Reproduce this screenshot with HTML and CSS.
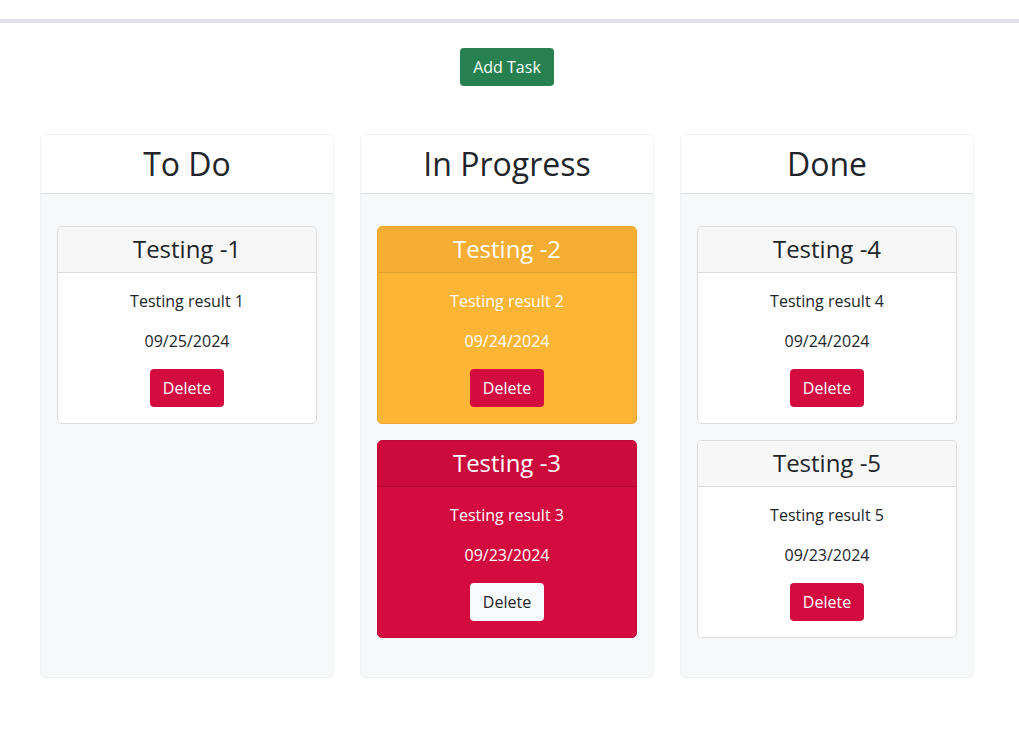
FILE: index.html
```html
<!DOCTYPE html>
<html lang="en">
<head>
<meta charset="utf-8">
<title>Task Board</title>
<link rel="stylesheet" href="styles.css">
</head>
<body>
<div class="topbar"></div>
<div class="wrap">
  <div class="actions"><button class="btn btn-success">Add Task</button></div>
  <div class="board">
    <section class="column">
      <header class="col-head"><h2>To Do</h2></header>
      <div class="col-body">
        <div class="task">
          <div class="task-head"><h3>Testing -1</h3></div>
          <div class="task-body">
            <p>Testing result 1</p>
            <p>09/25/2024</p>
            <button class="btn btn-danger">Delete</button>
          </div>
        </div>
      </div>
    </section>
    <section class="column">
      <header class="col-head"><h2>In Progress</h2></header>
      <div class="col-body">
        <div class="task task-warn">
          <div class="task-head"><h3>Testing -2</h3></div>
          <div class="task-body">
            <p>Testing result 2</p>
            <p>09/24/2024</p>
            <button class="btn btn-danger">Delete</button>
          </div>
        </div>
        <div class="task task-danger">
          <div class="task-head"><h3>Testing -3</h3></div>
          <div class="task-body">
            <p>Testing result 3</p>
            <p>09/23/2024</p>
            <button class="btn btn-light">Delete</button>
          </div>
        </div>
      </div>
    </section>
    <section class="column">
      <header class="col-head"><h2>Done</h2></header>
      <div class="col-body">
        <div class="task">
          <div class="task-head"><h3>Testing -4</h3></div>
          <div class="task-body">
            <p>Testing result 4</p>
            <p>09/24/2024</p>
            <button class="btn btn-danger">Delete</button>
          </div>
        </div>
        <div class="task">
          <div class="task-head"><h3>Testing -5</h3></div>
          <div class="task-body">
            <p>Testing result 5</p>
            <p>09/23/2024</p>
            <button class="btn btn-danger">Delete</button>
          </div>
        </div>
      </div>
    </section>
  </div>
</div>
</body>
</html>
```

FILE: styles.css
```css
* { box-sizing: border-box; }
html, body { margin: 0; padding: 0; }
body {
  font-family: "Open Sans", "Liberation Sans", sans-serif;
  font-size: 16px;
  line-height: 1.5;
  color: #212529;
  background: #fff;
}
.topbar {
  margin-top: 19px;
  height: 4px;
  background: #dee2e6;
}
.wrap {
  width: 934px;
  margin-left: 40px;
}
.actions {
  text-align: center;
  padding-top: 25px;
}
.btn {
  font-family: inherit;
  font-size: 16px;
  line-height: 24px;
  padding: 6px 12px;
  border: 1px solid transparent;
  border-radius: 4px;
  cursor: pointer;
  display: inline-block;
}
.btn-success { background: #26804f; color: #fff; }
.btn-danger { background: #d30b3f; color: #fff; }
.btn-light { background: #f8f9fa; color: #212529; }
.board {
  display: flex;
  gap: 26px;
  margin-top: 48px;
  align-items: stretch;
}
.column {
  width: 294px;
  border: 1px solid #f1f2f4;
  border-radius: 5px;
  overflow: hidden;
  display: flex;
  flex-direction: column;
}
.col-head {
  background: #fff;
  border-bottom: 1px solid #dfe1e4;
  height: 59px;
  display: flex;
  align-items: center;
  justify-content: center;
}
.col-head h2 {
  margin: 0;
  font-size: 32px;
  font-weight: 400;
  line-height: 1.2;
}
.col-body {
  flex: 1;
  background: #f7f8fa;
  padding: 32px 16px 39px;
  display: flex;
  flex-direction: column;
  gap: 16px;
}
.task {
  background: #fff;
  border: 1px solid #dcdcdc;
  border-radius: 5px;
  overflow: hidden;
  text-align: center;
}
.task-head {
  background: #f7f7f7;
  border-bottom: 1px solid #dcdcdc;
  height: 46px;
  display: flex;
  align-items: center;
  justify-content: center;
}
.task-head h3 {
  margin: 0;
  font-size: 24px;
  font-weight: 400;
  line-height: 1.2;
}
.task-body {
  padding: 16px;
}
.task-body p {
  margin: 0 0 16px;
}
.task-warn {
  background: #fdb535;
  border-color: #e8a530;
  color: #fff;
}
.task-warn .task-head {
  background: #f5ae33;
  border-bottom-color: #e0a02f;
}
.task-danger {
  background: #d30b3f;
  border-color: #c00a39;
  color: #fff;
}
.task-danger .task-head {
  background: #cc0b3d;
  border-bottom-color: #b40936;
}
```
